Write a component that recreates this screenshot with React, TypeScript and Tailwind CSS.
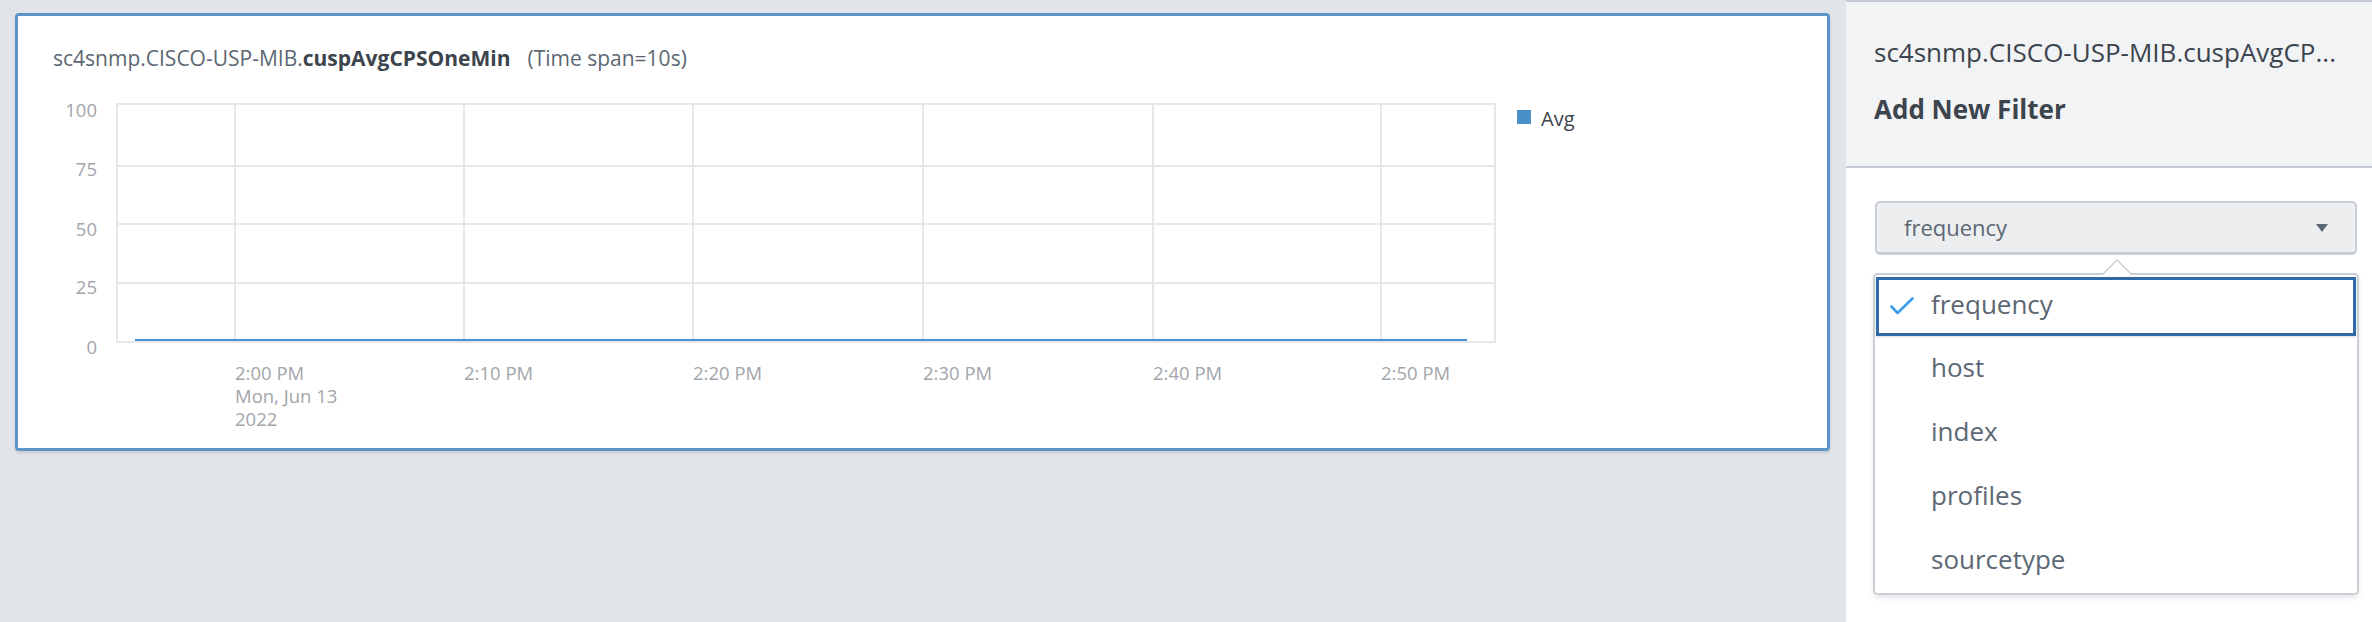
const GRID_Y = [32, 94, 152, 211, 270]
const Y_LABELS = [
  { v: '100', y: 37 },
  { v: '75', y: 96 },
  { v: '50', y: 156 },
  { v: '25', y: 214 },
  { v: '0', y: 274 },
]
const GRID_X = [217, 446, 675, 905, 1135, 1363]
const X_LABELS = ['2:00 PM', '2:10 PM', '2:20 PM', '2:30 PM', '2:40 PM', '2:50 PM']
const FIELDS = ['host', 'index', 'profiles', 'sourcetype']

function Chart() {
  return (
    <svg width={1809} height={376} viewBox="0 0 1809 376" className="block">
      {/* grid */}
      <rect x={99} y={32} width={1378} height={238} fill="none" stroke="#e6e7eb" strokeWidth={2} />
      {GRID_Y.map((y) => (
        <line key={y} x1={99} x2={1477} y1={y} y2={y} stroke="#e6e7eb" strokeWidth={2} />
      ))}
      {GRID_X.map((x) => (
        <line key={x} x1={x} x2={x} y1={32} y2={270} stroke="#e6e7eb" strokeWidth={2} />
      ))}

      {/* series */}
      <line x1={117} x2={1449} y1={268} y2={268} stroke="#4c8fce" strokeWidth={2} />

      {/* y axis */}
      {Y_LABELS.map((l) => (
        <text key={l.v} x={79} y={l.y} textAnchor="end" dominantBaseline="central" fontSize={18.5} fill="#a2a5a9">
          {l.v}
        </text>
      ))}

      {/* x axis */}
      {X_LABELS.map((t, i) => (
        <text key={t} x={GRID_X[i]} y={300} dominantBaseline="central" fontSize={18.5} fill="#a2a5a9">
          {t}
        </text>
      ))}
      <text x={217} y={323} dominantBaseline="central" fontSize={18.5} fill="#a2a5a9">
        Mon, Jun 13
      </text>
      <text x={217} y={346} dominantBaseline="central" fontSize={18.5} fill="#a2a5a9">
        2022
      </text>

      {/* legend */}
      <rect x={1499} y={38} width={14} height={14} fill="#4b8fc7" />
      <text x={1523} y={46} dominantBaseline="central" fontSize={20} fill="#3c444d">
        Avg
      </text>
    </svg>
  )
}

export default function App() {
  return (
    <div className="flex h-[622px] w-[2372px] overflow-hidden bg-[#e1e4e9] font-['Open_Sans',sans-serif]">
      {/* Dashboard area */}
      <div className="flex-1 pl-[15px] pr-[16px] pt-[13px]">
        <div className="h-[438px] w-[1815px] rounded-[4px] border-[3px] border-[#5b95ca] bg-white shadow-[0_2px_3px_rgba(0,0,0,0.12)]">
          <div className="pl-[35px] pt-[28px] text-[21px] leading-[28px] text-[#5c6773]">
            sc4snmp.CISCO-USP-MIB.<span className="font-bold text-[#3c444d]">cuspAvgCPSOneMin</span>
            <span className="ml-[17px]">(Time span=10s)</span>
          </div>
          <Chart />
        </div>
      </div>

      {/* Side panel */}
      <div className="flex w-[526px] flex-col bg-white">
        <div className="h-[168px] border-y-2 border-[#c3cbd4] bg-[#f2f3f5] pl-[28px] pt-[32px] text-[#3c444d]">
          <div className="text-[26px] leading-[36px]">sc4snmp.CISCO-USP-MIB.cuspAvgCP...</div>
          <div className="mt-[21px] text-[26px] font-bold leading-[36px]">Add New Filter</div>
        </div>

        <div className="pl-[29px] pt-[33px]">
          <div className="w-[482px]">
            <button className="flex h-[54px] w-full items-center justify-between rounded-[5px] border-2 border-b-[3px] border-[#c9cfd6] bg-[#eceef0] pl-[27px] pr-[27px] text-[22px] text-[#5c6773]">
              <span>frequency</span>
              <svg width="12" height="8" viewBox="0 0 12 8">
                <path d="M0 0h12L6 8z" fill="#5c6773" />
              </svg>
            </button>

            <div className="relative -mx-[2px] mt-[18px] rounded-[5px] border-2 border-[#c9cfd6] bg-white shadow-[0_3px_5px_rgba(0,0,0,0.1)]">
              {/* notch */}
              <svg className="absolute -top-[16px] left-[227px]" width="30" height="16" viewBox="0 0 30 16">
                <path d="M0 16L15 1l15 15z" fill="white" />
                <path d="M0 16L15 1l15 15" fill="none" stroke="#c9cfd6" strokeWidth="1.5" />
              </svg>

              <div className="h-[62px] px-[1px] pb-[1px] pt-[2px]">
                <div className="flex h-full items-center border-[3px] border-[#2f6aa6] pb-[4px] pl-[11px] shadow-[0_1px_2px_rgba(0,0,0,0.15)]">
                  <svg width="24" height="18" viewBox="0 0 24 18" className="mr-[17px] mt-[3px]">
                    <path d="M1.5 9.5l6 6.5L22.5 1.5" fill="none" stroke="#3d9ceb" strokeWidth="2.6" strokeLinecap="round" strokeLinejoin="round" />
                  </svg>
                  <span className="text-[26px] text-[#5c6773]">frequency</span>
                </div>
              </div>

              {FIELDS.map((f) => (
                <div key={f} className="flex h-[64px] items-center pb-[3px] pl-[56px] text-[26px] text-[#5c6773]">
                  {f}
                </div>
              ))}
            </div>
          </div>
        </div>
      </div>
    </div>
  )
}
